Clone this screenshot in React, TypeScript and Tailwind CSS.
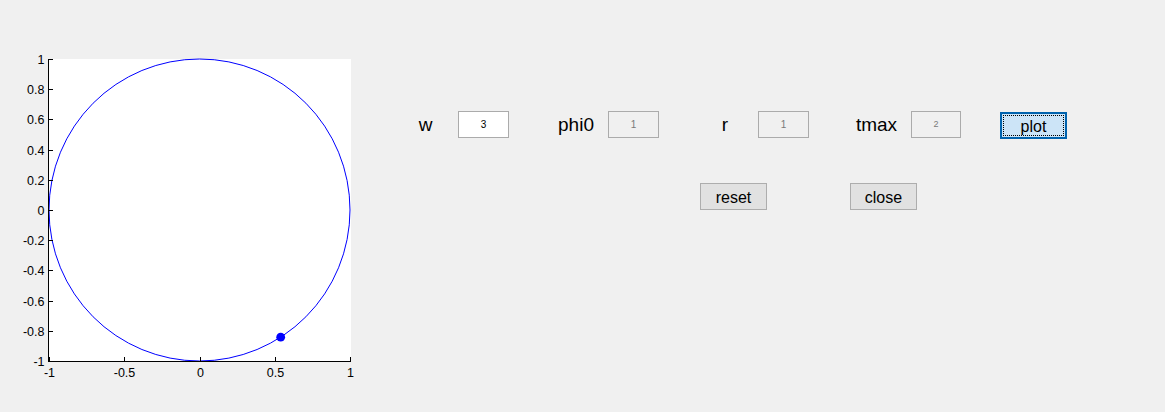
import React from "react";

const X0 = 49;
const X1 = 350;
const Y0 = 59;
const Y1 = 361;
const cx = (v: number) => X0 + ((v + 1) / 2) * (X1 - X0);
const cy = (v: number) => Y1 - ((v + 1) / 2) * (Y1 - Y0);

const yTicks = [1, 0.8, 0.6, 0.4, 0.2, 0, -0.2, -0.4, -0.6, -0.8, -1];
const xTicks = [-1, -0.5, 0, 0.5, 1];

function Chart() {
  return (
    <svg width={400} height={412} className="shrink-0 block">
      <rect x={X0} y={Y0} width={X1 - X0 + 1} height={Y1 - Y0} fill="#ffffff" />
      <ellipse
        cx={cx(0)}
        cy={cy(0)}
        rx={(X1 - X0) / 2}
        ry={(Y1 - Y0) / 2}
        fill="none"
        stroke="#0000ff"
        strokeWidth={1}
      />
      <circle cx={280.7} cy={337.2} r={4.4} fill="#0000ff" />
      <line x1={X0 - 0.5} y1={Y0} x2={X0 - 0.5} y2={Y1 + 1} stroke="#000" strokeWidth={1} />
      <line x1={X0 - 1} y1={Y1 + 0.5} x2={X1 + 1} y2={Y1 + 0.5} stroke="#000" strokeWidth={1} />
      {yTicks.map((t) => {
        const y = Math.round(cy(t)) + 0.5;
        return (
          <g key={"y" + t}>
            <line x1={X0} y1={y} x2={X0 + 4} y2={y} stroke="#000" strokeWidth={1} />
            <text
              x={44.5}
              y={y + 4.5}
              textAnchor="end"
              fontSize={12.5}
              fontFamily="'Liberation Sans', Arial, sans-serif"
              fill="#000"
            >
              {t === 0 ? "0" : String(t)}
            </text>
          </g>
        );
      })}
      {xTicks.map((t) => {
        const x = Math.round(cx(t)) + 0.5;
        return (
          <g key={"x" + t}>
            <line x1={x} y1={Y1} x2={x} y2={Y1 - 4} stroke="#000" strokeWidth={1} />
            <text
              x={x}
              y={376.5}
              textAnchor="middle"
              fontSize={12.5}
              fontFamily="'Liberation Sans', Arial, sans-serif"
              fill="#000"
            >
              {String(t)}
            </text>
          </g>
        );
      })}
    </svg>
  );
}

export default function App() {
  return (
    <div className="w-[1165px] h-[412px] bg-[#f0f0f0] flex font-['Liberation_Sans',Arial,sans-serif] text-black overflow-hidden">
      <Chart />
      <div className="flex flex-col pt-[111px]">
        <div className="flex items-start h-[28px]">
          <div className="w-[51px] h-[27px] text-center text-[19px] leading-[27px]">w</div>
          <div className="ml-[7px] w-[51px] h-[27px] border border-[#ababab] bg-white flex items-center justify-center text-[10px] text-black">
            3
          </div>
          <div className="ml-[42px] w-[50px] h-[27px] text-center text-[19px] leading-[27px]">phi0</div>
          <div className="ml-[7px] w-[51px] h-[27px] border border-[#ababab] bg-[#f0f0f0] flex items-center justify-center text-[10px] text-[#7a7a7a]">
            1
          </div>
          <div className="ml-[41px] w-[50px] h-[27px] text-center text-[19px] leading-[27px]">r</div>
          <div className="ml-[8px] w-[51px] h-[27px] border border-[#ababab] bg-[#f0f0f0] flex items-center justify-center text-[10px] text-[#7a7a7a]">
            1
          </div>
          <div className="ml-[42px] w-[51px] h-[27px] text-center text-[19px] leading-[27px]">tmax</div>
          <div className="ml-[9px] w-[50px] h-[27px] border border-[#ababab] bg-[#f0f0f0] flex items-center justify-center text-[9px] text-[#7a7a7a]">
            2
          </div>
          <div className="ml-[39px] mt-[1px] w-[67px] h-[27px] border-2 border-[#0062ad] bg-[#cce4f7] p-[1px]">
            <div className="w-full h-full border border-dotted border-black flex items-center justify-center pt-[2px] text-[16px] leading-none">
              plot
            </div>
          </div>
        </div>
        <div className="flex items-start mt-[44px]">
          <div className="ml-[300px] w-[67px] h-[27px] border border-[#adadad] bg-[#e1e1e1] flex items-center justify-center pt-[2px] text-[16px] leading-none">
            reset
          </div>
          <div className="ml-[83px] w-[67px] h-[27px] border border-[#adadad] bg-[#e1e1e1] flex items-center justify-center pt-[2px] text-[16px] leading-none">
            close
          </div>
        </div>
      </div>
    </div>
  );
}
